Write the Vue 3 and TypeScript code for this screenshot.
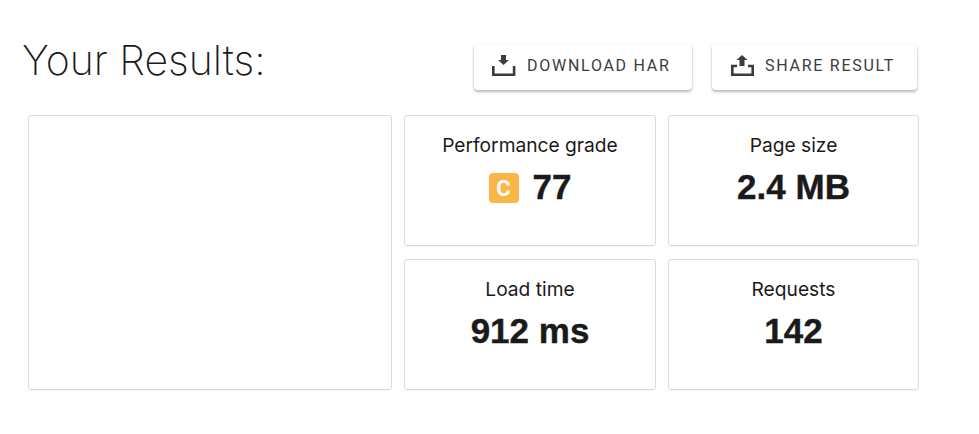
<template>
  <div class="page">
    <div class="head">
      <h1 class="title">Your Results:</h1>
      <div class="actions">
        <button class="btn btn-har" type="button">
          <svg class="ico" viewBox="0 0 24 24" width="24" height="24">
            <path d="M9 2h5v5h3l-5.500 5-5.500-5h3z" fill="#3c3c3c" />
            <path d="M1.300 13v8.700h20.800V13" fill="none" stroke="#3c3c3c" stroke-width="2.600" />
          </svg>
          <span>DOWNLOAD HAR</span>
        </button>
        <button class="btn btn-share" type="button">
          <svg class="ico" viewBox="0 0 24 24" width="24" height="24">
            <path d="M12 2l5.500 5h-3v6h-5V7h-3z" fill="#3c3c3c" />
            <path d="M7 13H2.300v8.700h20.400V13H18" fill="none" stroke="#3c3c3c" stroke-width="2.600" />
          </svg>
          <span>SHARE RESULT</span>
        </button>
      </div>
    </div>
    <div class="grid">
      <div class="card preview"></div>
      <div v-for="m in metrics" :key="m.label" class="card metric">
        <div class="label">{{ m.label }}</div>
        <div class="value">
          <span v-if="m.grade" class="grade">{{ m.grade }}</span>
          {{ m.value }}
        </div>
      </div>
    </div>
  </div>
</template>

<script setup lang="ts">
const metrics: { label: string; value: string; grade?: string }[] = [
  { label: 'Performance grade', value: '77', grade: 'C' },
  { label: 'Page size', value: '2.4 MB' },
  { label: 'Load time', value: '912 ms' },
  { label: 'Requests', value: '142' },
]
</script>

<style>
html,
body {
  background: #fff;
}
</style>

<style scoped>
.page {
  width: 979px;
  height: 434px;
  box-sizing: border-box;
  padding: 44px 60px 0 22px;
  overflow: hidden;
}
.head {
  display: flex;
  justify-content: space-between;
  height: 71px;
}
.title {
  margin: -10px 0 0;
  font: 200 41px/52px Inter, sans-serif;
  color: #1a1a1a;
}
.actions {
  display: flex;
  gap: 20px;
  margin-right: 2px;
}
.btn {
  display: flex;
  align-items: center;
  height: 46px;
  box-sizing: border-box;
  border: 0;
  border-radius: 4px;
  background: #fff;
  box-shadow: 0 2px 3px rgba(0, 0, 0, 0.28), 0 0 2px rgba(0, 0, 0, 0.06);
  font: 400 16px Roboto, sans-serif;
  letter-spacing: 1.730px;
  color: #3c3c3c;
  padding: 0 0 4px;
}
.btn-har {
  width: 218px;
  padding-left: 18px;
}
.btn-share {
  width: 205px;
  padding-left: 18px;
}
.ico {
  margin-right: 11px;
}
.grid {
  display: grid;
  grid-template-columns: 364px 252px 251px;
  grid-template-rows: 131px 131px;
  gap: 13px 12px;
  margin-left: 6px;
}
.card {
  box-sizing: border-box;
  border: 1px solid #dcdcdc;
  border-radius: 3px;
  background: #fff;
  box-shadow: 0 1px 1px rgba(0, 0, 0, 0.04);
}
.preview {
  grid-row: span 2;
}
.metric {
  text-align: center;
  padding-top: 16px;
}
.label {
  font: 400 19.200px/26px Inter, sans-serif;
  color: #1a1a1a;
}
.value {
  display: flex;
  justify-content: center;
  align-items: center;
  gap: 14px;
  margin-top: 7px;
  font: 700 35px/44px "Liberation Sans", sans-serif;
  -webkit-text-stroke: 0.4px #1a1a1a;
  color: #1a1a1a;
}
.grade {
  display: inline-flex;
  align-items: center;
  justify-content: center;
  width: 30px;
  height: 30px;
  margin-top: 2px;
  border-radius: 4px;
  background: #fcb549;
  color: #fff;
  -webkit-text-stroke: 0;
  font: 700 22px Roboto, sans-serif;
}
</style>
